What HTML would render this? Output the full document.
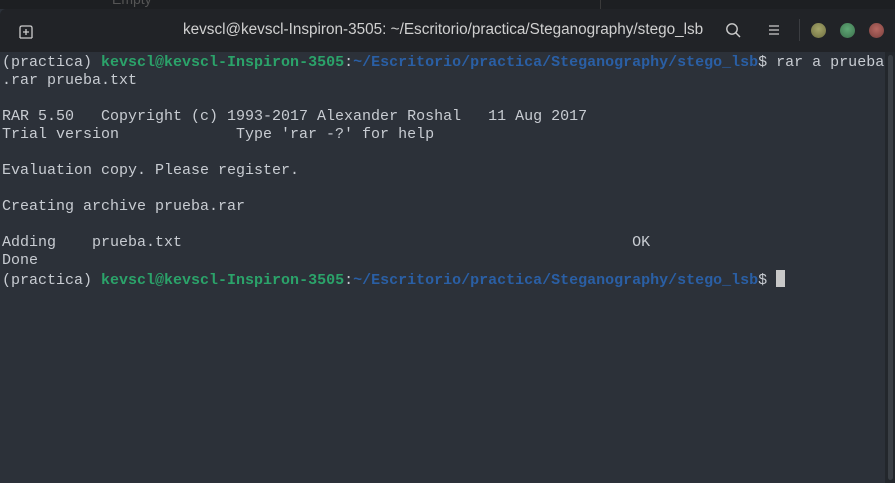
<!DOCTYPE html>
<html><head><meta charset="utf-8"><style>
body{margin:0;width:895px;height:483px;overflow:hidden;background:#2c3139;position:relative;font-family:"Liberation Sans",sans-serif}
.top{position:absolute;left:0;top:0;width:895px;height:9px;background:#1d1f22}
.top .t{position:absolute;left:112px;top:-9px;color:#555;font-size:14px}
.top .d{position:absolute;left:600px;top:0;width:1px;height:9px;background:#3a3a3a}
.hdr{position:absolute;left:0;top:9px;width:895px;height:43px;background:#212327;border-top-left-radius:6px}
.title{position:absolute;left:183px;top:12px;color:#d0d0d0;font-size:15.3px;white-space:nowrap}
.term{position:absolute;left:2px;top:54px;font-family:"Liberation Mono",monospace;font-size:15px;line-height:18px;color:#c8ccd2;white-space:pre}
.g{color:#2ba36a;font-weight:bold}.b{color:#2a5fa5;font-weight:bold}
.cur{display:inline-block;width:9px;height:17px;background:#c8c8c8;vertical-align:-3px}
.sb{position:absolute;left:885px;top:52px;width:10px;height:431px;background:#23272c}
.th{position:absolute;left:888px;top:55px;width:5px;height:425px;background:#3a3f45;border-radius:3px}
.btn{position:absolute;top:23px;width:15px;height:15px;border-radius:50%}
</style></head><body>
<div class="top"><span class="t">Empty</span><div class="d"></div></div>
<div class="hdr">
<svg style="position:absolute;left:19px;top:16px" width="16" height="14" viewBox="0 0 16 14"><path d="M1 13V3q0-2 2-2h8q2 0 2 2v10M4 7h6M7 4v6M1 13h12" stroke="#ccc" stroke-width="1.3" fill="none"/></svg>
<div class="title">kevscl@kevscl-Inspiron-3505: ~/Escritorio/practica/Steganography/stego_lsb</div>
<svg style="position:absolute;left:725px;top:13px" width="16" height="16" viewBox="0 0 16 16"><circle cx="7" cy="7" r="5.2" stroke="#ccc" stroke-width="1.4" fill="none"/><path d="M11 11l4 4" stroke="#ccc" stroke-width="1.5"/></svg>
<svg style="position:absolute;left:768px;top:15px" width="12" height="12" viewBox="0 0 12 12"><path d="M1 2h10M1 6h10M1 10h10" stroke="#ccc" stroke-width="1.2"/></svg>
<div style="position:absolute;left:799px;top:10px;width:1px;height:22px;background:#3b3d41"></div>
</div>
<div class="btn" style="left:811px;background:radial-gradient(circle at 50% 40%,#a5a56a,#6e6e40)"></div>
<div class="btn" style="left:840px;background:radial-gradient(circle at 50% 40%,#5fa775,#3c704c)"></div>
<div class="btn" style="left:869px;background:radial-gradient(circle at 50% 40%,#b66862,#7a403d)"></div>
<div class="term">(practica) <span class="g">kevscl@kevscl-Inspiron-3505</span>:<span class="b">~/Escritorio/practica/Steganography/stego_lsb</span>$ rar a prueba
.rar prueba.txt

RAR 5.50   Copyright (c) 1993-2017 Alexander Roshal   11 Aug 2017
Trial version             Type 'rar -?' for help

Evaluation copy. Please register.

Creating archive prueba.rar

Adding    prueba.txt                                                  OK 
Done
(practica) <span class="g">kevscl@kevscl-Inspiron-3505</span>:<span class="b">~/Escritorio/practica/Steganography/stego_lsb</span>$ <span class="cur"></span></div>
<div class="sb"></div><div class="th"></div>
</body></html>
